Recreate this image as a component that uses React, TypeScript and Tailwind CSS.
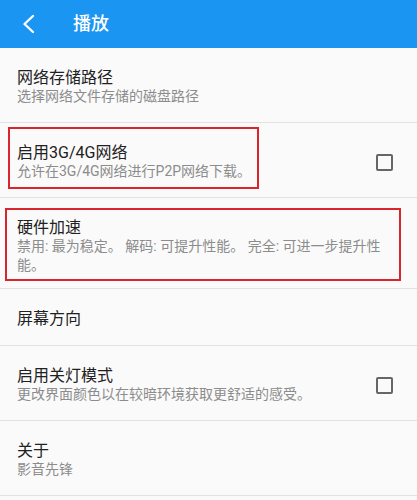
import React from "react";

const font = { fontFamily: 'Roboto, "Noto Sans CJK SC", sans-serif' };

function Row({
  title,
  subtitle,
  checkbox,
  children,
  pb = "pb-[16px]",
}: {
  title: string;
  subtitle?: string;
  checkbox?: boolean;
  children?: React.ReactNode;
  pb?: string;
}) {
  return (
    <div className="relative border-b border-[#e2e2e2]">
      <div className={`flex items-center pl-[17px] pr-[24px] pt-[21px] ${pb}`}>
        <div className="flex-1 min-w-0">
          <div className="text-[16px] leading-[18px] text-[#212121]">{title}</div>
          {subtitle && (
            <div className="text-[14px] leading-[19px] text-[#8c8c8c]">{subtitle}</div>
          )}
        </div>
        {checkbox && (
          <div className="w-[17px] h-[17px] border-2 border-[#666666] rounded-[2px] ml-4 mr-0 shrink-0" />
        )}
      </div>
      {children}
    </div>
  );
}

export default function App() {
  return (
    <div className="w-[417px] h-[500px] bg-[#fafafa] overflow-hidden" style={font}>
      <div className="h-[48px] bg-[#1a95f2] flex items-center">
        <svg width="14" height="20" viewBox="0 0 14 20" className="ml-[21px]" fill="none">
          <path d="M12 2 L3.5 10 L12 18" stroke="white" strokeWidth="2.4" strokeLinecap="round" strokeLinejoin="round" />
        </svg>
        <div className="ml-[38px] text-[18px] font-medium text-white leading-none">播放</div>
      </div>
      <Row title="网络存储路径" subtitle="选择网络文件存储的磁盘路径" />
      <Row title="启用3G/4G网络" subtitle="允许在3G/4G网络进行P2P网络下载。" checkbox>
        <div className="absolute left-[8px] top-[4px] w-[251px] h-[62px] border-2 border-[#d8262c] pointer-events-none" />
      </Row>
      <Row
        title="硬件加速"
        subtitle="禁用: 最为稳定。 解码: 可提升性能。 完全: 可进一步提升性能。"
        pb="pb-[13px]"
      >
        <div className="absolute left-[5px] top-[10px] w-[396px] h-[73px] border-2 border-[#d8262c] pointer-events-none" />
      </Row>
      <Row title="屏幕方向" pb="pb-[17px]" />
      <Row title="启用关灯模式" subtitle="更改界面颜色以在较暗环境获取更舒适的感受。" checkbox />
      <Row title="关于" subtitle="影音先锋" />
    </div>
  );
}
